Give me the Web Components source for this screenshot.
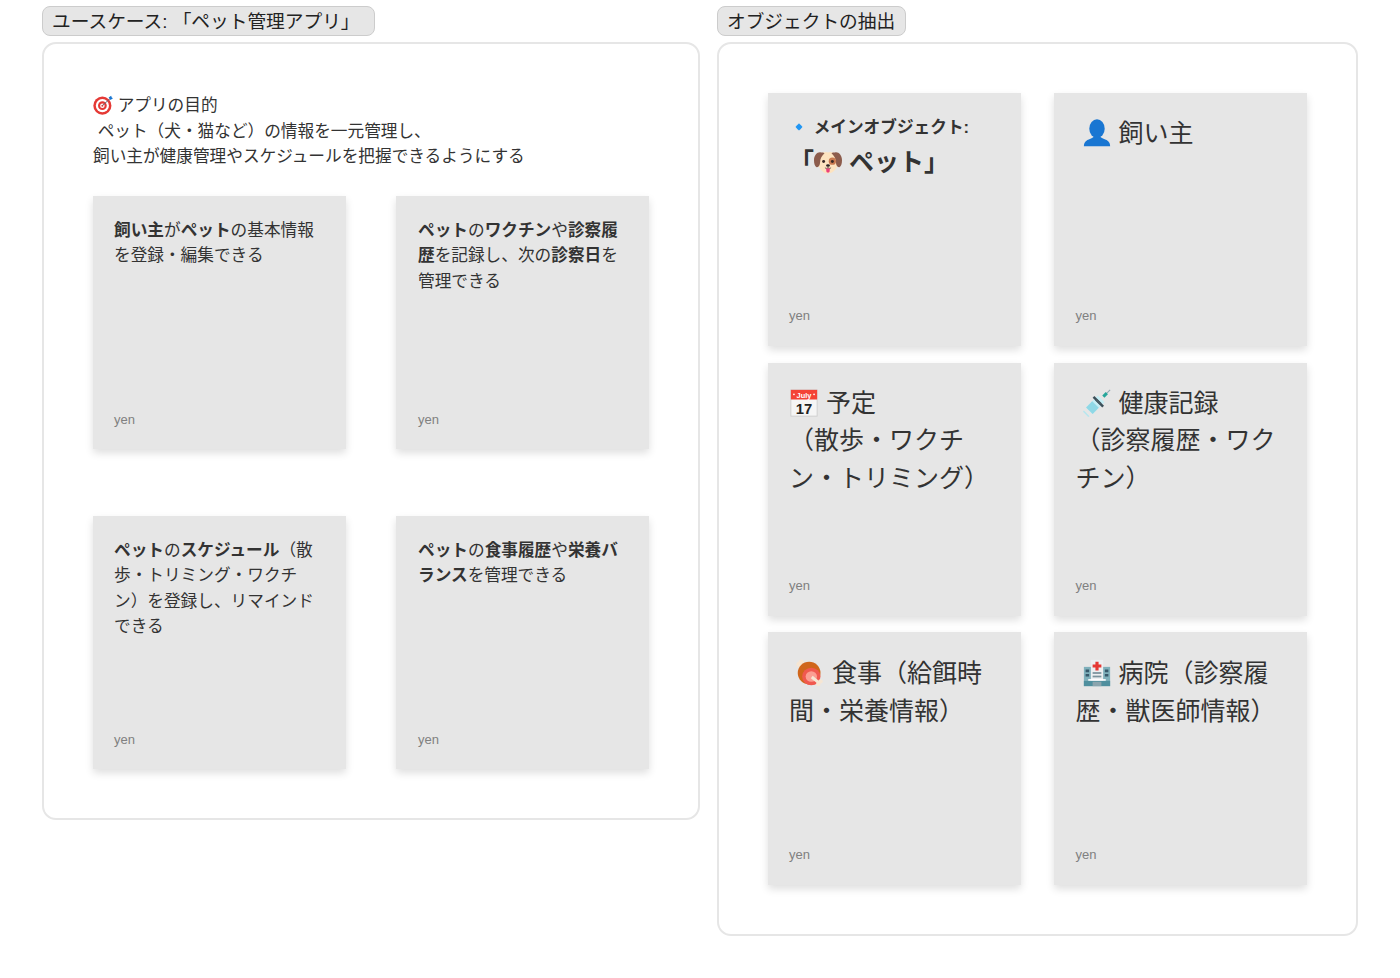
<!DOCTYPE html>
<html lang="ja"><head><meta charset="utf-8"><title>ペット管理アプリ</title>
<style>
html,body{margin:0;background:#fff}
body{font-family:"Liberation Sans","Noto Sans CJK JP",sans-serif;color:#333;text-spacing-trim:space-all}
b{font-weight:700}
</style></head><body>
<x-board>
  <x-section title="ユースケース: 「ペット管理アプリ」" slot="left" w="658" pad="14">
    <x-intro>
      <x-emoji name="target"></x-emoji> アプリの目的<br>
      &nbsp;ペット（犬・猫など）の情報を一元管理し、<br>
      飼い主が健康管理やスケジュールを把握できるようにする
    </x-intro>
    <x-grid cols="253px 253px" col-gap="50" row-gap="67">
      <x-sticky><b>飼い主</b>が<b>ペット</b>の基本情報を登録・編集できる</x-sticky>
      <x-sticky><b>ペット</b>の<b>ワクチン</b>や<b>診察履歴</b>を記録し、次の<b>診察日</b>を管理できる</x-sticky>
      <x-sticky><b>ペット</b>の<b>スケジュール</b>（散歩・トリミング・ワクチン）を登録し、リマインドできる</x-sticky>
      <x-sticky><b>ペット</b>の<b>食事履歴</b>や<b>栄養バランス</b>を管理できる</x-sticky>
    </x-grid>
  </x-section>
  <x-section title="オブジェクトの抽出" slot="right" w="641" pad="10">
    <x-grid cols="253px 253px" col-gap="33" row-gap="16.5">
      <x-sticky size="big"><x-main><x-emoji name="diamond"></x-emoji> <span>メインオブジェクト:</span></x-main><b>「<x-emoji name="dog" fixed></x-emoji> ペット」</b></x-sticky>
      <x-sticky size="big"><x-emoji name="person" fixed inset></x-emoji> 飼い主</x-sticky>
      <x-sticky size="big"><x-emoji name="calendar" fixed></x-emoji> 予定<br>（散歩・ワクチン・トリミング）</x-sticky>
      <x-sticky size="big"><x-emoji name="syringe" fixed inset></x-emoji> 健康記録<br>（診察履歴・ワクチン）</x-sticky>
      <x-sticky size="big"><x-emoji name="meat" fixed inset></x-emoji> 食事（給餌時間・栄養情報）</x-sticky>
      <x-sticky size="big"><x-emoji name="hospital" fixed inset></x-emoji> 病院（診察履歴・獣医師情報）</x-sticky>
    </x-grid>
  </x-section>
</x-board>
<script>
const shadow=(el,html)=>{el.attachShadow({mode:'open'}).innerHTML=html;};
customElements.define('x-board',class extends HTMLElement{constructor(){super();shadow(this,`<style>
:host{display:flex;align-items:flex-start;gap:17px;padding:6px 0 0 42px}
</style><slot name="left"></slot><slot name="right"></slot>`);}});
customElements.define('x-section',class extends HTMLElement{connectedCallback(){if(this.shadowRoot)return;
const t=this.getAttribute('title');this.removeAttribute('title');
shadow(this,`<style>
:host{display:flex;flex-direction:column;align-items:flex-start;gap:6px;width:${this.getAttribute('w')}px}
.pill{box-sizing:border-box;height:30px;padding:1px ${this.getAttribute('pad')}px 0 9px;font-size:18.7px;line-height:28px;color:#222;background:#e6e6e6;border:1px solid #ccc;border-radius:8px;white-space:nowrap}
.frame{box-sizing:border-box;width:100%;padding:49px;border:2px solid #e6e6e6;border-radius:14px;background:#fff}
</style><div class="pill">${t}</div><div class="frame"><slot></slot></div>`);}});
customElements.define('x-intro',class extends HTMLElement{constructor(){super();shadow(this,`<style>
:host{display:block;font-size:16.67px;line-height:25.5px;color:#333;margin-bottom:26px}
</style><slot></slot>`);}});
customElements.define('x-grid',class extends HTMLElement{connectedCallback(){if(this.shadowRoot)return;
shadow(this,`<style>
:host{display:grid;grid-template-columns:${this.getAttribute('cols')};column-gap:${this.getAttribute('col-gap')}px;row-gap:${this.getAttribute('row-gap')}px}
</style><slot></slot>`);}});
customElements.define('x-main',class extends HTMLElement{constructor(){super();shadow(this,`<style>
:host{display:block;font-size:16.67px;font-weight:700;line-height:28px;margin:-1px 0 2px;color:#333}
</style><slot></slot>`);}});
customElements.define('x-sticky',class extends HTMLElement{connectedCallback(){if(this.shadowRoot)return;
const big=this.getAttribute('size')==='big';
shadow(this,`<style>
:host{display:flex;flex-direction:column;box-sizing:border-box;height:253px;padding:${big?22.4:22}px 21px ${big?21:20}px;background:#e6e6e6;box-shadow:0 4px 8px rgba(0,0,0,.13);color:#333;font-size:${big?'25px':'16.67px'};line-height:${big?'37.5px':'25.5px'}}
:host(:nth-child(even)){padding-left:${big?21.5:22}px;padding-right:20px}
${big?':host(:nth-child(n+5)){padding-top:23px}':''}
.body{flex:1;min-height:0}
.foot{font-size:13px;line-height:18px;color:#808080}
</style><div class="body"><slot></slot></div><div class="foot">yen</div>`);}});
const EMOJI={
target:`<circle cx="15" cy="17" r="14.5" fill="#e53935"/><circle cx="15" cy="17" r="10.5" fill="#fff"/><circle cx="15" cy="17" r="7" fill="#e53935"/><circle cx="15" cy="17" r="3.6" fill="#fff"/><circle cx="15" cy="17" r="1.6" fill="#e53935"/><path d="M15 17 27 6" stroke="#5d6b75" stroke-width="1.5"/><path d="M25 4l4-3 1 3 2 1-4 3z" fill="#1976d2"/>`,
diamond:`<path d="M16 10.500c.6 0 5 4.500 5.500 5.500-.5 1-4.900 5.500-5.500 5.500s-5-4.500-5.500-5.500c.5-1 4.900-5.500 5.500-5.500z" fill="#2196f3"/>`,
dog:`<path d="M6 8c4-4 8-4 10-3 2-1 6-1 10 3 2 3 2 8 1 11-1 5-6 10-11 10S6 24 5 19C4 16 4 11 6 8z" fill="#fde3bf"/><path d="M8 5C4 4 0 8 0 14c0 4 1 7 3 8 2 0 4-2 4-6 0-4 2-7 5-10-1-1-3-1-4-1zM24 5c4-1 8 3 8 9 0 4-1 7-3 8-2 0-4-2-4-6 0-4-2-7-5-10 1-1 3-1 4-1z" fill="#8c5c4c"/><circle cx="21" cy="15" r="4.200" fill="#c8794f"/><circle cx="11" cy="15.500" r="1.700" fill="#3a2a25"/><circle cx="21" cy="15.500" r="1.700" fill="#3a2a25"/><ellipse cx="16" cy="20" rx="2.200" ry="1.500" fill="#2c2320"/><path d="M16 21.500v1.500M12.500 22.500c1 1 2.500 1 3.500.5 1 .5 2.500.5 3.500-.5" stroke="#2c2320" stroke-width=".8" fill="none"/><path d="M13.800 23.500h4.400l-.4 3.500c-.8 1.400-2.800 1.400-3.600 0z" fill="#ec407a"/>`,
person:`<ellipse cx="16" cy="11" rx="8.800" ry="10.800" fill="#1976d2"/><path d="M1 31c0-2 .6-5 4-7 2-1 5-2 7-3.500h8c2 1.500 5 2.500 7 3.500 3.400 2 4 5 4 7z" fill="#1976d2"/>`,
calendar:`<rect x="1" y="1" width="30" height="30" fill="#f5f5f5" stroke="#ccc"/><rect x="1" y="1" width="30" height="11" fill="#f44336"/><circle cx="4.500" cy="6" r="1" fill="#fff"/><circle cx="27.500" cy="6" r="1" fill="#fff"/><text x="16" y="10" text-anchor="middle" font-family="Liberation Sans" font-size="8.500" font-weight="700" fill="#fff">July</text><text x="16" y="28" text-anchor="middle" font-family="Liberation Sans" font-size="17" font-weight="700" fill="#222">17</text>`,
syringe:`<path d="M31 1 24 8" stroke="#90a4ae" stroke-width="1.200"/><path d="M26 3.500l-4 4 2.500 2.500 4-4z" fill="#26a69a"/><path d="M17 7.500 24.500 15 11 28.500 3.500 21z" fill="#c6eef5"/><path d="M10.500 14 18 21.500 11 28.500 3.500 21z" fill="#8fd8e6"/><path d="M13 8l11 11-2 2L11 10z" fill="#3c4f58"/><path d="M16 11l5 5-2 2-5-5z" fill="#4a5d66"/><path d="M1 24.500 7.500 31l-1.500 1L0 26z" fill="#b5e6ee"/>`,
meat:`<path d="M5 5 13 13" stroke="#f6e6d3" stroke-width="4.500"/><circle cx="6" cy="3.500" r="3" fill="#f6e6d3"/><circle cx="3.500" cy="6" r="3" fill="#f6e6d3"/><ellipse cx="15" cy="16" rx="13" ry="13" fill="#d0661b"/><ellipse cx="17.500" cy="20" rx="10.500" ry="10" fill="#f0594f"/><ellipse cx="17.500" cy="20" rx="6.500" ry="6" fill="#fb9e92"/><path d="M18 20.500 26 27" stroke="#f6e6d3" stroke-width="3.500"/><circle cx="28" cy="25.500" r="2.500" fill="#f6e6d3"/><circle cx="25.500" cy="28.500" r="2.500" fill="#f6e6d3"/>`,
hospital:`<rect x="1" y="9" width="30" height="22" fill="#7fb0bb"/><rect x="9" y="1" width="14" height="27" fill="#eceff1"/><path d="M14.200 3h3.600v3.200H21v3.600h-3.200V13h-3.600V9.800H11V6.200h3.200z" fill="#e53935"/><path d="M3 12h4v3H3zM3 17h4v3H3zM25 12h4v3h-4zM25 17h4v3h-4z" fill="#37596b"/><rect x="11" y="15" width="10" height="2" fill="#7b929c"/><rect x="11" y="19" width="10" height="2" fill="#7b929c"/><rect x="6" y="23" width="20" height="2" fill="#fff"/><rect x="1" y="25" width="30" height="6" fill="#4f8f9e"/><rect x="11" y="26" width="10" height="5" fill="#8aa4ad"/>`
};
customElements.define('x-emoji',class extends HTMLElement{connectedCallback(){if(this.shadowRoot)return;
const fixed=this.hasAttribute('fixed'),inset=this.hasAttribute('inset'),cal=this.getAttribute('name')==='calendar';
shadow(this,`<style>
:host{display:inline-block;width:${fixed?'28px':'1.2em'};height:${fixed?'28px':'1.2em'};vertical-align:${fixed?'-5px':'-0.22em'};margin-left:${inset?'7px':cal?'1px':'0'};margin-right:${inset||cal?'1px':'0'}}
svg{display:block;width:100%;height:100%}
</style><svg viewBox="0 0 32 32" aria-hidden="true">${EMOJI[this.getAttribute('name')]}</svg>`);}});
</script>
</body></html>
